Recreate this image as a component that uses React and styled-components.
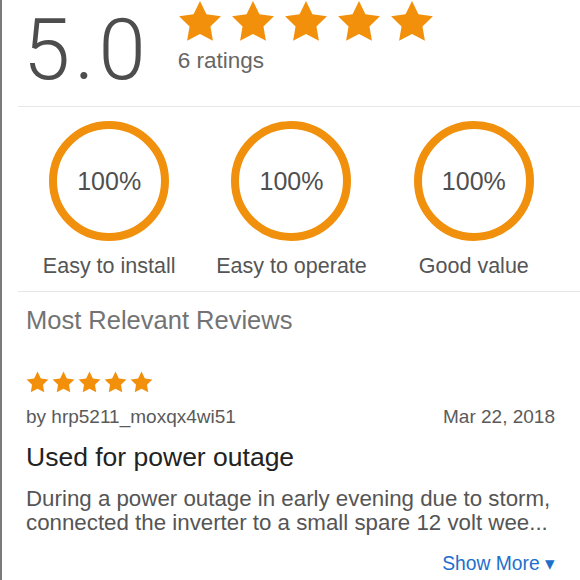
import React from 'react';
import styled, { createGlobalStyle } from 'styled-components';

const GlobalStyle = createGlobalStyle`
  html, body {
    margin: 0;
    padding: 0;
    background: #fff;
  }
  body {
    font-family: "Liberation Sans", Arial, sans-serif;
  }
`;

const Page = styled.div`
  border-left: 2px solid #7b7b7b;
  min-height: 580px;
  box-sizing: border-box;
  background: #fff;
  overflow: hidden;
`;

const Summary = styled.div`
  display: flex;
  align-items: flex-start;
  height: 106px;
  padding-left: 21px;
`;

const Score = styled.div`
  font-family: Roboto, "Liberation Sans", sans-serif;
  font-weight: 300;
  font-size: 85px;
  line-height: normal;
  letter-spacing: 4px;
  color: #4d4d4d;
`;

const SummaryRight = styled.div`
  display: flex;
  flex-direction: column;
  margin-left: 28px;
`;

const StarRow = styled.div`
  display: flex;
  gap: ${(p) => p.$gap}px;
`;

const Count = styled.div`
  font-size: 22.5px;
  color: #666;
  margin-top: 6px;
`;

const Divider = styled.div`
  height: 1px;
  background: #e7e7e7;
  margin-left: 16px;
`;

const Attributes = styled.div`
  display: grid;
  grid-template-columns: repeat(3, 1fr);
  margin: 0 15px 0 16px;
  padding: 14px 0 12px;
`;

const Attribute = styled.div`
  display: flex;
  flex-direction: column;
  align-items: center;
`;

const Ring = styled.div`
  width: 120px;
  height: 120px;
  box-sizing: border-box;
  border: 8px solid #f0900c;
  border-radius: 50%;
  display: flex;
  align-items: center;
  justify-content: center;
  font-size: 25px;
  color: #4f4f4f;
`;

const AttrLabel = styled.div`
  margin-top: 13px;
  font-size: 21.5px;
  color: #555;
`;

const Reviews = styled.section`
  padding: 0 25px 0 24px;
`;

const SectionTitle = styled.h2`
  margin: 14px 0 0;
  font-weight: 400;
  font-size: 25.5px;
  color: #737373;
`;

const Review = styled.article`
  margin-top: 36px;
`;

const Meta = styled.div`
  display: flex;
  justify-content: space-between;
  margin-top: 13px;
  font-size: 19px;
  color: #5a5a5a;
`;

const ReviewTitle = styled.h3`
  margin: 14px 0 0;
  font-weight: 400;
  font-size: 26.5px;
  color: #222;
`;

const Body = styled.p`
  margin: 14px 0 0;
  font-size: 22.3px;
  line-height: 24px;
  color: #555;
  white-space: nowrap;
`;

const MoreRow = styled.div`
  display: flex;
  justify-content: flex-end;
  margin-top: 17px;
`;

const ShowMore = styled.button`
  background: none;
  border: none;
  padding: 0;
  font-family: inherit;
  font-size: 19.3px;
  color: #1d6fcc;
  cursor: pointer;
`;

const Star = ({ size }) => (
  <svg width={size} height={size * 0.95} viewBox="0 0 24 23" aria-hidden="true">
    <path
      d="M12 0.6l3.55 7.2 7.95 1.16-5.75 5.6 1.36 7.92L12 18.74l-7.11 3.74 1.36-7.92L0.5 8.96l7.95-1.16z"
      fill="#f2900c"
    />
  </svg>
);

const Stars = ({ size, gap }) => (
  <StarRow $gap={gap}>
    {[0, 1, 2, 3, 4].map((i) => (
      <Star key={i} size={size} />
    ))}
  </StarRow>
);

const attributes = [
  { label: 'Easy to install', value: '100%' },
  { label: 'Easy to operate', value: '100%' },
  { label: 'Good value', value: '100%' },
];

export default function App() {
  return (
    <Page>
      <GlobalStyle />
      <Summary>
        <Score>5.0</Score>
        <SummaryRight>
          <Stars size={44} gap={9} />
          <Count>6 ratings</Count>
        </SummaryRight>
      </Summary>
      <Divider />
      <Attributes>
        {attributes.map((a) => (
          <Attribute key={a.label}>
            <Ring>{a.value}</Ring>
            <AttrLabel>{a.label}</AttrLabel>
          </Attribute>
        ))}
      </Attributes>
      <Divider />
      <Reviews>
        <SectionTitle>Most Relevant Reviews</SectionTitle>
        <Review>
          <Stars size={23} gap={3} />
          <Meta>
            <span>by hrp5211_moxqx4wi51</span>
            <span>Mar 22, 2018</span>
          </Meta>
          <ReviewTitle>Used for power outage</ReviewTitle>
          <Body>
            During a power outage in early evening due to storm,
            <br />
            connected the inverter to a small spare 12 volt wee...
          </Body>
          <MoreRow>
            <ShowMore>Show More ▾</ShowMore>
          </MoreRow>
        </Review>
      </Reviews>
    </Page>
  );
}
